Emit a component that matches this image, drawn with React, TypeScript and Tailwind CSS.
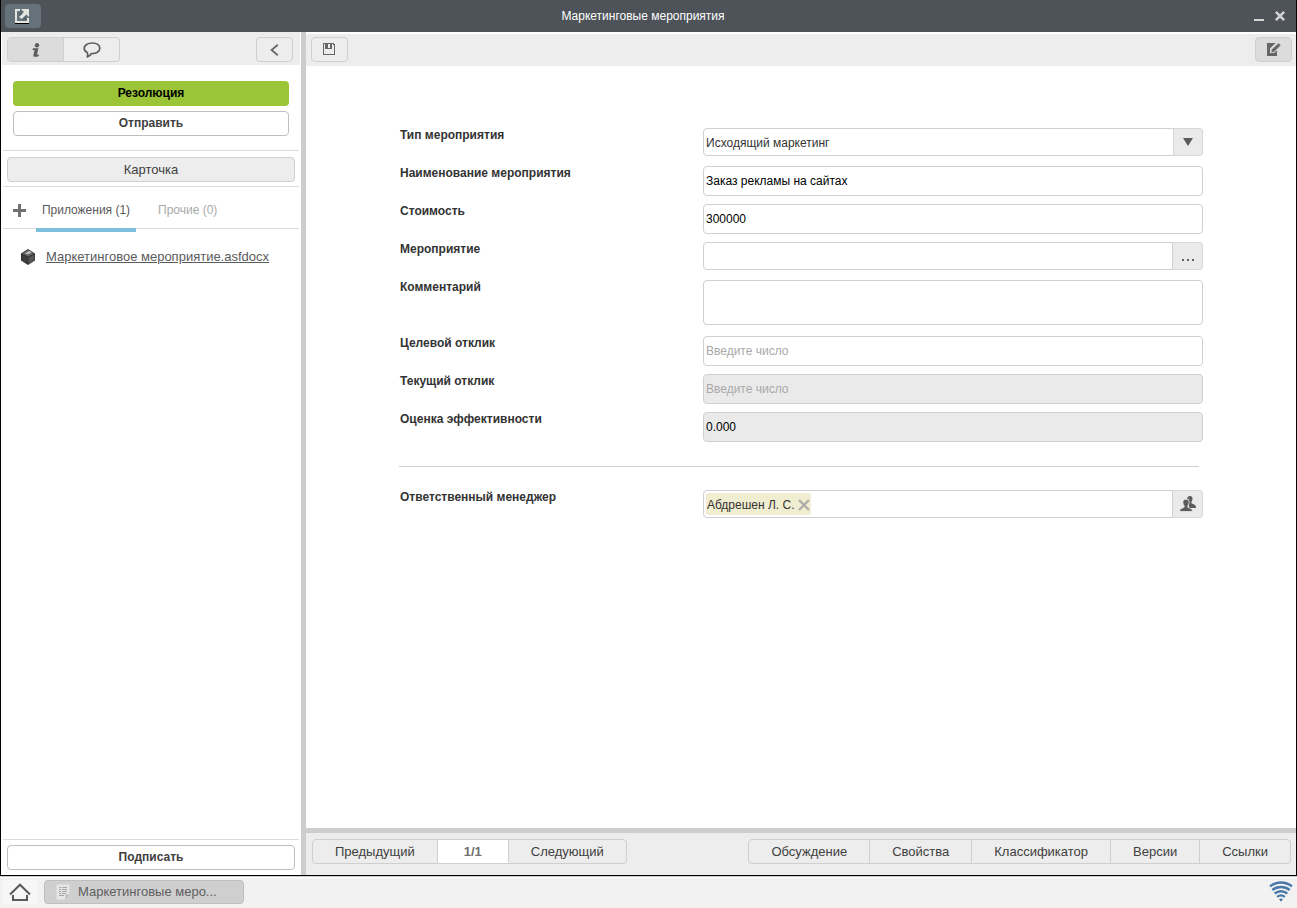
import React, { useState } from 'react';

const OpenIcon = () => (
  <svg width="14" height="15" viewBox="0 0 14 15" aria-hidden="true">
    <path d="M0 14h14v1H0z" fill="#000" />
    <path d="M0 0h5v2H2v10h10V9h2v5H0z" fill="#e4e4e0" />
    <path d="M6 0h8v8l-2.500-2.500L6.500 10 4 8l5-5z" fill="#e4e4e0" />
    <path d="M4.500 5 7 3v2L4.500 7zM7.500 10.500 11 8v2.500z" fill="#4d5b66" />
  </svg>
);

const InfoIcon = () => (
  <svg width="8" height="14" viewBox="0 0 8 14" fill="#5e5e5e" aria-hidden="true">
    <circle cx="5" cy="2.200" r="2.200" />
    <path d="M.8 5.200h5.700L5.100 11.200c-.1.700.4.800 1.900.3l-.3 1.400C5.400 14 .9 14.600 1.400 12l1-4.300c.1-.8-.5-.9-1.900-.7z" />
  </svg>
);

const BubbleIcon = () => (
  <svg width="18" height="16" viewBox="0 0 18 16" fill="none" stroke="#5e5e5e" strokeWidth="1.700" strokeLinejoin="round" aria-hidden="true">
    <path d="M9.300 1C4.700 1 1.200 3.300 1.200 6.300c0 2 1.200 3.500 3.300 4.500.3 1.600.2 3-.2 4.200 2-.6 3.200-1.700 4-3.400 5 .3 8.500-2 8.500-5.300S13.900 1 9.300 1z" />
  </svg>
);

const BackIcon = () => (
  <svg width="9" height="12" viewBox="0 0 9 12" fill="none" stroke="#666" strokeWidth="1.800" aria-hidden="true">
    <path d="M7.800.8 1.600 6l6.200 5.200" />
  </svg>
);

const SaveIcon = () => (
  <svg width="12" height="12" viewBox="0 0 12 12" fill="#666" shapeRendering="crispEdges" aria-hidden="true">
    <path fillRule="evenodd" d="M0 0h11v1h1v11H0zM1 1v10h10V2h-1V1z" />
    <path fillRule="evenodd" d="M2 0h7v6H2zM5 1v4h2V1z" />
  </svg>
);

const EditIcon = () => (
  <svg width="14" height="13" viewBox="0 0 14 13" fill="#666" aria-hidden="true">
    <path d="M0 0h8.500L3 5.500V10h4l3-2.500V13H0z" />
    <path d="M11.500 0 14 2.300 7.200 9.200 4 9.700 4.400 6.600z" stroke="#dcdcdc" strokeWidth=".7" />
  </svg>
);

const CloseIcon = () => (
  <svg width="10" height="10" viewBox="0 0 10 10" stroke="#d5d5d5" strokeWidth="2.500" className="block" aria-hidden="true">
    <path d="M.9.900l8.200 8.200M9.100.900.9 9.100" />
  </svg>
);

const CubeIcon = () => (
  <svg width="14" height="16" viewBox="0 0 14 16" aria-hidden="true">
    <path d="M7 0 14 4.500v7L7 16 0 11.500v-7z" fill="#333" />
    <path d="M7 .8 12.800 4.500 7 7.500 1.200 4.500z" fill="#6b6b6b" />
    <path d="M7.500 8.500l6-3.300v6L7.500 15z" fill="#555" />
    <path d="M.8 5.500 6.500 8.500V15L.8 11.300z" fill="#3d3d3d" />
    <path d="M4 4.800 8.500 2l2 1.300L7.500 5z" fill="#c8c8c8" />
  </svg>
);

const PeopleIcon = () => (
  <svg width="16" height="16" viewBox="0 0 16 16" fill="#5c5c5c" aria-hidden="true">
    <path d="M9.800 0c1.900 0 2.900 1.300 2.700 3.100-.1 1.300-.6 2.100-1.100 2.700v1.400l3.200 1.600c1 .5 1.400 1.200 1.400 3.200H9V3.500L7.200 2.700C7.300 1 8.300 0 9.800 0z" />
    <path d="M6 3.200c2.200 0 3.300 1.500 3.100 3.500-.1 1.500-.7 2.400-1.200 3v1.600l3 1.300c1.100.5 1.400 1.200 1.400 2.900H-.3c0-1.700.3-2.400 1.400-2.900l3-1.300V9.700c-.5-.6-1.100-1.500-1.200-3C2.700 4.700 3.800 3.200 6 3.200z" stroke="#eaeaea" strokeWidth=".8" />
  </svg>
);

const HomeIcon = () => (
  <svg width="22" height="18" viewBox="0 0 22 18" fill="none" stroke="#5a5a5a" strokeWidth="2" aria-hidden="true">
    <path d="M1 11.500 11 1.700l10 9.800" />
    <path d="M4 12v5h14v-5" />
  </svg>
);

const DocIcon = () => (
  <svg width="14" height="16" viewBox="0 0 14 16" aria-hidden="true">
    <path d="M.5.500h13v10l-4 5h-9z" fill="#e6e6e6" />
    <path d="M13.500 10.500l-4 5v-5z" fill="#bdbdbd" />
    <path d="M3 3.500h2M6 3.500h5M3 5.500h2M6 5.500h5M3 7.500h2M6 7.500h5M3 9.500h2M6 9.500h4M3 11.500h5" stroke="#a5a5a5" />
  </svg>
);

const WifiIcon = () => (
  <svg width="24" height="21" viewBox="0 0 24 21" fill="none" stroke="#4878a8" strokeWidth="2.300" aria-hidden="true">
    <path d="M1 5.400C7.500.2 16.500.2 23 5.400" />
    <path d="M3.300 9c5-4 12.400-4 17.400 0" />
    <path d="M5.700 12.500c3.700-3 8.900-3 12.600 0" />
    <path d="M8.100 15.900c2.300-1.800 5.500-1.800 7.800 0" />
    <path d="M10 18.200q2-1.200 4 0L12 20.800z" fill="#4878a8" stroke="none" />
  </svg>
);

const fieldBase = 'w-full border border-[#d0d0d0] rounded-[4px] px-[2px] text-[12px] placeholder:text-[#a9a9a9] outline-none';

function Row({ id, label, tall, children }: { id: string; label: string; tall?: boolean; children: React.ReactNode }) {
  return (
    <div className={tall ? 'flex h-14 items-start' : 'flex h-[38px] items-start'}>
      <label htmlFor={id} className="w-[304px] shrink-0 pl-px text-[12px] leading-[14px] font-bold text-[#333]">
        {label}
      </label>
      <div className="min-w-0 flex-1">{children}</div>
    </div>
  );
}

function TextField({ id, label, initial = '', placeholder, readOnly }: { id: string; label: string; initial?: string; placeholder?: string; readOnly?: boolean }) {
  const [value, setValue] = useState(initial);
  return (
    <Row id={id} label={label}>
      <input
        id={id}
        type="text"
        value={value}
        readOnly={readOnly}
        placeholder={placeholder}
        onChange={(e) => setValue(e.target.value)}
        className={`${fieldBase} block h-[30px] text-black ${readOnly ? 'bg-[#eaeaea]' : 'bg-white'}`}
      />
    </Row>
  );
}

function Sidebar() {
  return (
    <aside className="flex w-[300px] shrink-0 flex-col bg-white">
      <div className="mx-px flex h-[33px] shrink-0 items-end justify-between bg-[#ededed] pr-[7px] pb-[3px] pl-[5px]">
        <div className="flex h-[25px] w-[113px] overflow-hidden rounded-[4px] border border-[#cfcfcf]">
          <button aria-label="Информация" className="flex flex-1 items-center justify-center border-r border-[#cfcfcf] bg-[#dcdcdc]">
            <InfoIcon />
          </button>
          <button aria-label="Комментарии" className="flex flex-1 items-center justify-center">
            <BubbleIcon />
          </button>
        </div>
        <button aria-label="Свернуть" className="flex h-[25px] w-[37px] items-center justify-center rounded-[4px] border border-[#cfcfcf]">
          <BackIcon />
        </button>
      </div>

      <div className="mx-3 mt-4 mb-[14px] flex flex-col gap-[5px] text-[12px] font-bold">
        <button className="h-[25px] rounded-[4px] bg-[#9bc437] pb-[2px] text-black">Резолюция</button>
        <button className="h-[25px] rounded-[4px] border border-[#bfbfbf] bg-white pb-[2px] text-[#404040]">Отправить</button>
      </div>

      <div className="mx-[2px] h-[37px] border-y border-[#dcdcdc] px-1 pt-[6px]">
        <button className="h-[25px] w-full rounded-[4px] border border-[#cfcfcf] bg-[#ededed] text-[13px] text-[#404040]">Карточка</button>
      </div>

      <div className="mx-[2px] flex h-[42px] items-stretch border-b border-[#dcdcdc] pl-[10px] text-[12px]">
        <button aria-label="Добавить" className="flex w-[13px] items-center pt-[6px]">
          <svg width="13" height="13" viewBox="0 0 13 13" fill="#707070" aria-hidden="true">
            <path d="M5 0h3v5h5v3H8v5H5V8H0V5h5z" />
          </svg>
        </button>
        <button className="-mb-[4px] ml-[10px] w-[100px] border-b-4 border-[#7ebfdf] pt-1 text-[#5a5a5a]">Приложения (1)</button>
        <button className="ml-[14px] px-2 pt-[5px] text-[#a9a9a9]">Прочие (0)</button>
      </div>

      <div className="mt-5 flex items-center gap-[11px] pl-5">
        <CubeIcon />
        <a href="#file" className="text-[13px] leading-4 text-[#5a5a5a] underline">Маркетинговое мероприятие.asfdocx</a>
      </div>

      <div className="mx-[2px] mt-auto border-t border-[#dcdcdc] px-1 pt-[5px] pb-[5px]">
        <button className="block h-[25px] w-full rounded-[4px] border border-[#bfbfbf] bg-white pb-[2px] text-[12px] font-bold text-[#404040]">Подписать</button>
      </div>
    </aside>
  );
}

function EventForm() {
  const [kind, setKind] = useState('Исходящий маркетинг');
  return (
    <form className="mx-auto mt-[62px] w-full max-w-[804px]" onSubmit={(e) => e.preventDefault()}>
      <Row id="kind" label="Тип мероприятия">
        <div className="relative">
          <select id="kind" value={kind} onChange={(e) => setKind(e.target.value)} className={`${fieldBase} block h-7 appearance-none bg-white pt-[2px] text-[#333]`}>
            <option>Исходящий маркетинг</option>
            <option>Входящий маркетинг</option>
          </select>
          <span className="pointer-events-none absolute inset-y-0 right-0 flex w-[30px] items-center justify-center rounded-r-[4px] border border-[#d8d8d8] bg-[#eaeaea]">
            <svg width="10" height="8" viewBox="0 0 10 8" fill="#5a5a5a" aria-hidden="true">
              <path d="M0 0h10L5 8z" />
            </svg>
          </span>
        </div>
      </Row>
      <TextField id="name" label="Наименование мероприятия" initial="Заказ рекламы на сайтах" />
      <TextField id="cost" label="Стоимость" initial="300000" />
      <Row id="event" label="Мероприятие">
        <div className="flex h-7">
          <input id="event" type="text" className="min-w-0 flex-1 rounded-l-[4px] border border-[#d0d0d0] px-[2px] text-[12px] outline-none" />
          <button type="button" aria-label="Выбрать" className="flex w-[30px] items-end justify-center rounded-r-[4px] border border-l-0 border-[#d8d8d8] bg-[#eaeaea] pb-2">
            <svg width="12" height="2" viewBox="0 0 12 2" fill="#606060" aria-hidden="true">
              <path d="M0 0h2v2H0zM5 0h2v2H5zM10 0h2v2h-2z" />
            </svg>
          </button>
        </div>
      </Row>
      <Row id="comment" label="Комментарий" tall>
        <textarea id="comment" className={`${fieldBase} block h-[45px] resize-none bg-white`} />
      </Row>
      <TextField id="target" label="Целевой отклик" placeholder="Введите число" />
      <TextField id="current" label="Текущий отклик" placeholder="Введите число" readOnly />
      <TextField id="score" label="Оценка эффективности" initial="0.000" readOnly />
      <hr className="mt-4 mr-1 mb-[23px] border-[#cfcfcf]" />
      <Row id="manager" label="Ответственный менеджер">
        <div className="flex h-7">
          <div className="flex min-w-0 flex-1 items-center rounded-l-[4px] border border-[#d0d0d0] px-[2px]">
            <span className="flex h-[22px] items-center gap-[3px] rounded-[3px] bg-[#f1edd0] px-px pt-[2px] text-[12px] text-[#333]">
              Абдрешен Л. С.
              <button type="button" aria-label="Удалить">
                <svg width="12" height="12" viewBox="0 0 12 12" stroke="#ababab" strokeWidth="2.200" className="block" aria-hidden="true">
                  <path d="M1 1l10 10M11 1 1 11" />
                </svg>
              </button>
            </span>
            <input id="manager" type="text" className="min-w-0 flex-1 text-[12px] outline-none" />
          </div>
          <button type="button" aria-label="Выбрать менеджера" className="flex w-[30px] items-center justify-center rounded-r-[4px] border border-l-0 border-[#d8d8d8] bg-[#eaeaea]">
            <PeopleIcon />
          </button>
        </div>
      </Row>
    </form>
  );
}

const sections = ['Обсуждение', 'Свойства', 'Классификатор', 'Версии', 'Ссылки'];

export default function App() {
  return (
    <div className="flex h-screen flex-col bg-[#f2f2f2] font-['Liberation_Sans',Arial,sans-serif]">
      <div className="flex min-h-0 flex-1 flex-col border-x border-b border-black bg-white">
        <header className="flex h-8 shrink-0 items-center bg-[#4d5358] pr-[11px] pl-1">
          <div className="flex-1">
            <button aria-label="Открыть в новом окне" className="flex h-6 w-9 items-center justify-center rounded-[4px] bg-[#657279] pr-[2px]">
              <OpenIcon />
            </button>
          </div>
          <h1 className="pr-1 text-[12px] text-white">Маркетинговые мероприятия</h1>
          <div className="flex flex-1 items-center justify-end gap-[11px]">
            <button aria-label="Свернуть окно" className="flex h-[10px] w-[10px] items-end">
              <span className="h-[2px] w-full bg-[#d5d5d5]" />
            </button>
            <button aria-label="Закрыть"><CloseIcon /></button>
          </div>
        </header>

        <div className="flex min-h-0 flex-1">
          <Sidebar />
          <div className="w-[5px] shrink-0 bg-[#cdcdcd]" />
          <main className="flex min-w-0 flex-1 flex-col bg-white">
            <div className="mt-[2px] flex h-8 shrink-0 items-start justify-between bg-[#ededed] pt-[3px] pr-1 pl-[5px]">
              <button aria-label="Сохранить" className="flex h-[25px] w-[37px] items-center justify-center rounded-[4px] border border-[#cfcfcf] pr-px pb-px">
                <SaveIcon />
              </button>
              <button aria-label="Редактировать" className="flex h-[25px] w-[37px] items-center justify-center rounded-[4px] border border-[#cfcfcf] bg-[#dcdcdc] pb-px">
                <EditIcon />
              </button>
            </div>
            <div className="min-h-0 flex-1 overflow-auto">
              <EventForm />
            </div>
            <div className="flex h-[47px] shrink-0 items-start justify-between border-t-[5px] border-[#cdcdcd] bg-[#ededed] pt-[6px] pr-[5px] pl-[6px] text-[13px] text-[#404040]">
              <div className="flex h-[25px] divide-x divide-[#cfcfcf] overflow-hidden rounded-[4px] border border-[#cfcfcf]">
                <button className="px-[22px]">Предыдущий</button>
                <span className="flex w-[71px] items-center justify-center bg-white font-bold text-[#707070]">1/1</span>
                <button className="px-[22px]">Следующий</button>
              </div>
              <nav className="flex h-[25px] divide-x divide-[#cfcfcf] overflow-hidden rounded-[4px] border border-[#cfcfcf]">
                {sections.map((s) => (
                  <button key={s} className="px-[22px]">{s}</button>
                ))}
              </nav>
            </div>
          </main>
        </div>
      </div>

      <footer className="flex h-8 shrink-0 items-center justify-between border-t border-[#cccccc] pr-1 pb-[2px] shadow-[inset_0_1px_0_#fff]">
        <div className="flex items-center gap-[7px] pl-[3px]">
          <button aria-label="Домой" className="flex h-6 w-[34px] items-center justify-center bg-[#f7f7f7]">
            <HomeIcon />
          </button>
          <button className="flex h-6 w-[200px] items-center gap-2 rounded-[4px] border border-[#bfbfbf] bg-[#cfcfcf] pl-[11px] text-[13px] text-[#606060]">
            <DocIcon />
            Маркетинговые меро...
          </button>
        </div>
        <WifiIcon />
      </footer>
    </div>
  );
}
